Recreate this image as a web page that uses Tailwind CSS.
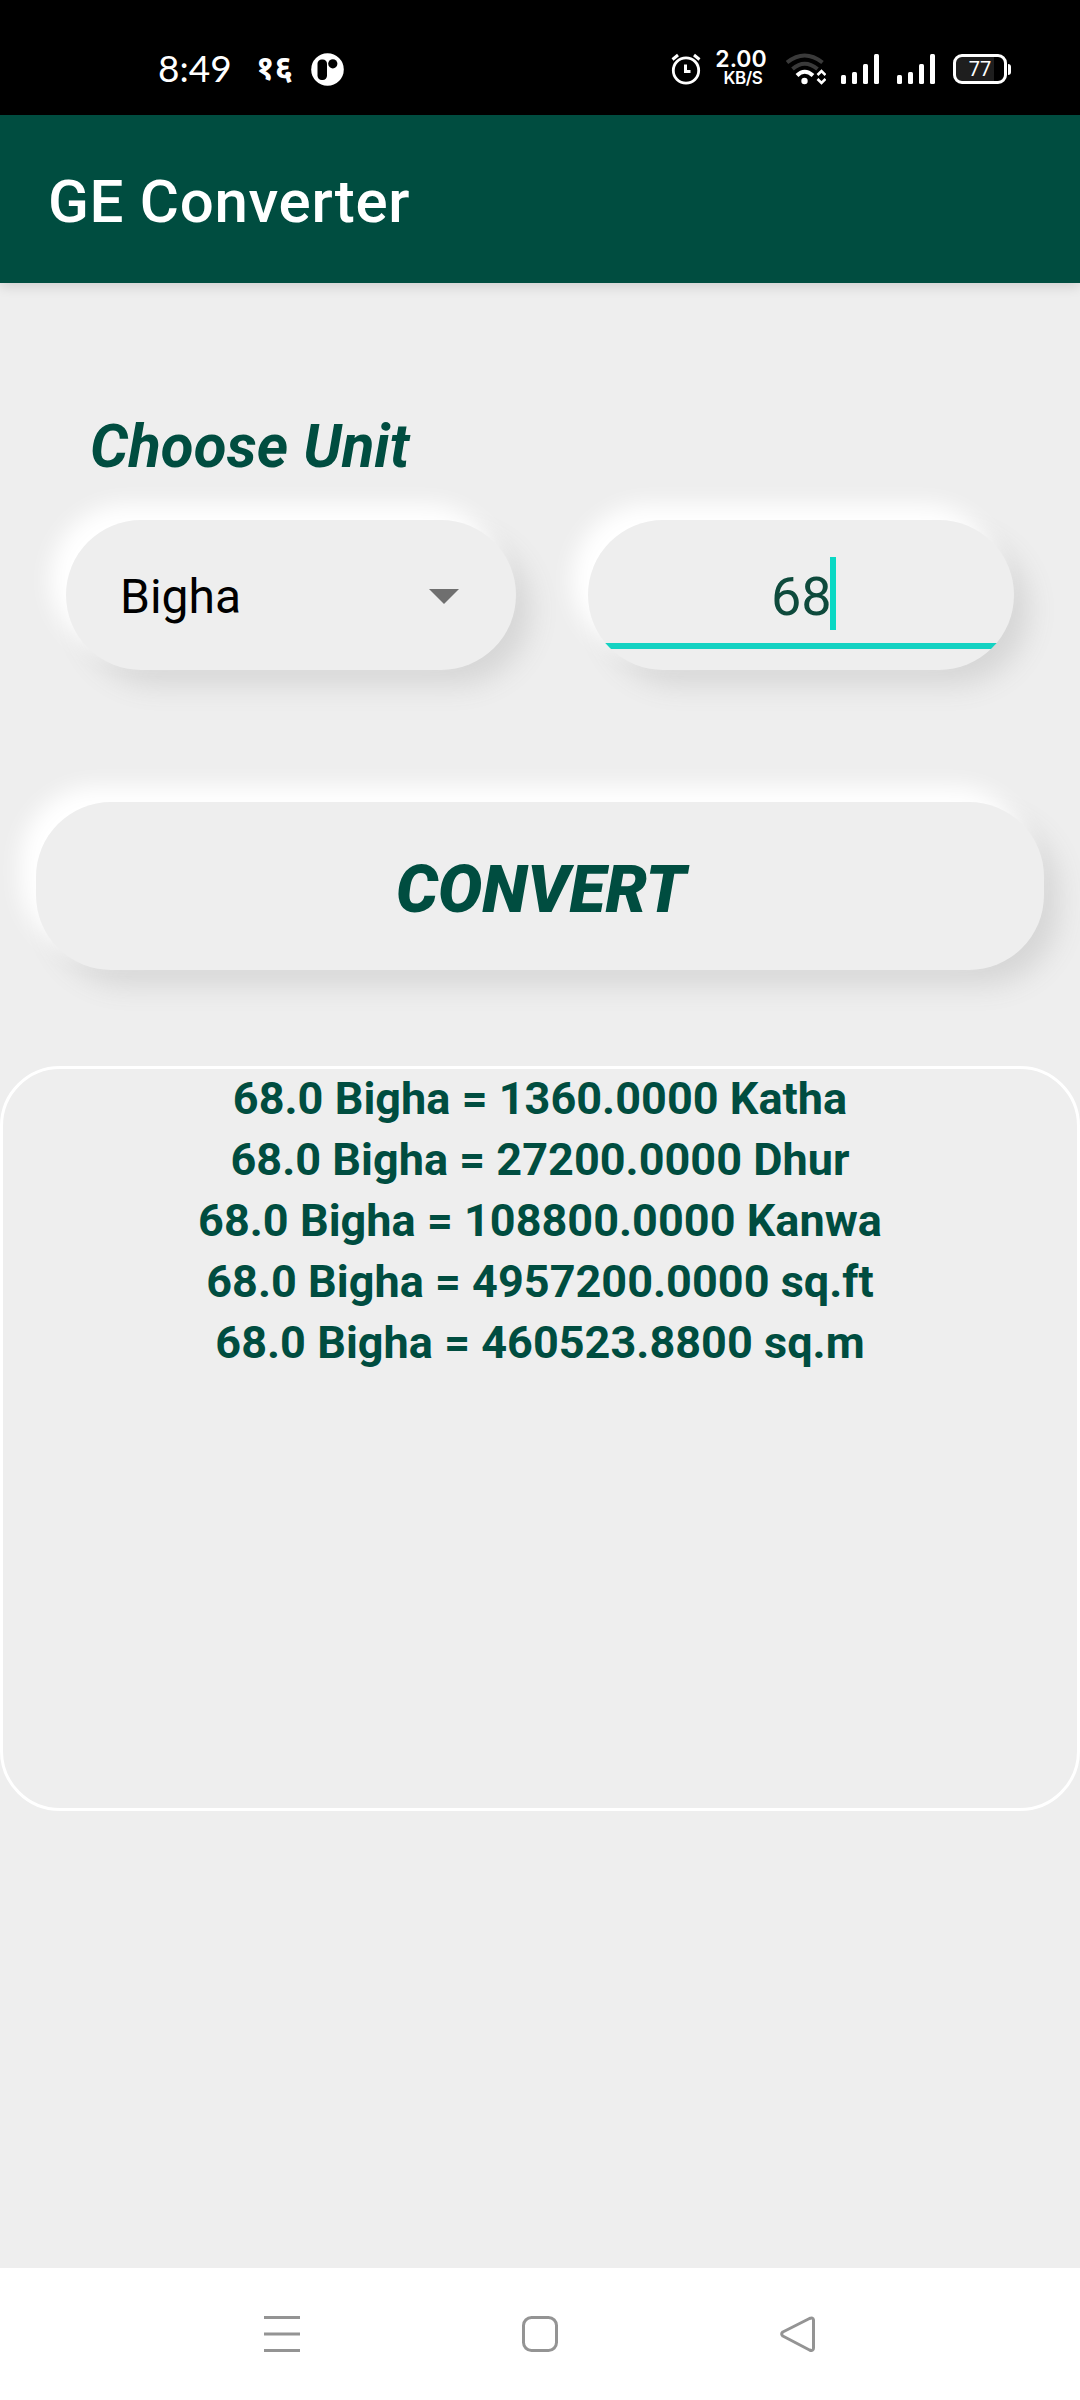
<!DOCTYPE html>
<html lang="en">
<head>
    <meta charset="UTF-8">
    <title>GE Converter</title>
    <script src="https://cdn.jsdelivr.net/npm/@tailwindcss/browser@4"></script>
</head>
<body class="w-[1080px] h-[2400px] flex flex-col bg-[#eeeeee] overflow-hidden font-['Roboto',sans-serif]">
    <!-- Status bar -->
    <div class="h-[115px] shrink-0 bg-black text-white flex items-center pt-[23px] pl-[158px] pr-[69px]">
        <span class="w-[72px] pb-[3px] font-['Lato',sans-serif] text-[37px] leading-none whitespace-nowrap">8:49</span>
        <span class="ml-[26px] w-[35px] pb-[5px] font-['Noto_Sans',sans-serif] font-bold text-[33px] leading-none whitespace-nowrap">१६</span>
        <svg class="ml-[20px]" width="33" height="33" viewBox="0 0 33 33">
            <circle cx="16.5" cy="16.5" r="16.3" fill="#fff"/>
            <rect x="6.5" y="6.5" width="9.5" height="20.5" rx="4.2" fill="#000"/>
            <circle cx="21.8" cy="10.8" r="4.6" fill="#000"/>
        </svg>

        <svg class="ml-auto" width="30" height="32" viewBox="0 0 30 32" fill="none" stroke="#fff">
            <circle cx="15" cy="17.5" r="12.7" stroke-width="2.8"/>
            <path d="M1.5 6.5L7 2M28.500 6.500L23 2" stroke-width="3"/>
            <path d="M14.500 11.500V18.500H19.500" stroke-width="3"/>
        </svg>
        <div class="ml-[14px] w-[54px] flex flex-col items-center font-['Inter',sans-serif] font-semibold">
            <span class="-ml-[2px] text-[23px] leading-[19px]">2.00</span>
            <span class="ml-[2px] text-[17px] leading-[19px] tracking-[-0.4px]">KB/S</span>
        </div>
        <svg class="ml-[17px]" width="40" height="32" viewBox="0 0 40 32" fill="none">
            <path d="M1 9.500Q18.500 -4.500 36.500 9.500" stroke="#3a3a3a" stroke-width="4"/>
            <path d="M6.500 16Q18.500 5.500 31.500 16" stroke="#3a3a3a" stroke-width="4"/>
            <path d="M11 22.500Q18.500 15 27 22.500" stroke="#fff" stroke-width="4"/>
            <circle cx="18.500" cy="28" r="3.200" fill="#fff"/>
            <path d="M31.500 22L35.500 18L39.500 22M31.500 26L35.500 30L39.500 26" stroke="#fff" stroke-width="2.600"/>
        </svg>
        <svg class="ml-[15px]" width="38" height="30" viewBox="0 0 38 30" fill="#fff">
            <rect x="0" y="21" width="5" height="9" rx="1.500"/>
            <rect x="11" y="18" width="5" height="12" rx="1.500"/>
            <rect x="22" y="10" width="5" height="20" rx="1.500"/>
            <rect x="33" y="0" width="5" height="30" rx="1.500"/>
        </svg>
        <svg class="ml-[18px]" width="38" height="30" viewBox="0 0 38 30" fill="#fff">
            <rect x="0" y="21" width="5" height="9" rx="1.500"/>
            <rect x="11" y="18" width="5" height="12" rx="1.500"/>
            <rect x="22" y="10" width="5" height="20" rx="1.500"/>
            <rect x="33" y="0" width="5" height="30" rx="1.500"/>
        </svg>
        <div class="ml-[18px] w-[54px] h-[30px] border-[3px] border-white rounded-[9px] flex items-center justify-center bg-linear-to-r from-[#1e1e1e] from-80% to-black to-80%">
            <span class="text-[20px] leading-none">77</span>
        </div>
        <div class="ml-px w-[3px] h-[11px] bg-white rounded-r-sm"></div>
    </div>

    <!-- App bar -->
    <header class="relative h-[168px] shrink-0 bg-[#004d40] flex items-center px-12 pt-[6px] shadow-[0_3px_12px_rgba(0,0,0,0.14)]">
        <h1 class="text-white font-medium text-[60px] leading-none tracking-[0.7px]">GE Converter</h1>
    </header>

    <main class="flex-1 flex flex-col">
        <h2 class="mt-[129px] ml-[90px] h-[70px] text-[#004d40] font-bold italic text-[60px] leading-[70px] tracking-[0.1px]">Choose Unit</h2>

        <div class="mt-[38px] pl-[66px] pr-[66px] flex justify-between">
            <div class="w-[450px] h-[150px] rounded-[75px] bg-[#eeeeee] flex items-center justify-between pl-[54px] pr-[57px] shadow-[-15px_-15px_22px_1px_#ffffff,15px_15px_28px_#d6d6d6]">
                <span class="pt-1 text-black text-[48px] leading-none">Bigha</span>
                <svg class="mt-[3px]" width="30" height="15" viewBox="0 0 30 15"><path d="M0 0H30L15 15Z" fill="#6f6f6f"/></svg>
            </div>
            <div class="w-[426px] h-[150px] rounded-[75px] bg-[#eeeeee] shadow-[-15px_-15px_22px_1px_#ffffff,15px_15px_28px_#d6d6d6]">
                <div class="h-full rounded-[75px] overflow-hidden flex flex-col">
                    <div class="h-[123px] pt-[37px] pl-[183px] flex">
                        <span class="w-[59px] text-[#0e4a3c] text-[54px] leading-[79px]">68</span>
                        <span class="w-[6px] h-[73px] bg-[#0ad8c4]"></span>
                    </div>
                    <div class="h-[6px] bg-[#14d2c2]"></div>
                </div>
            </div>
        </div>

        <button class="mt-[132px] mx-9 h-[168px] shrink-0 rounded-[75px] bg-[#eeeeee] pt-[7px] pl-[2px] text-[#004d40] font-black italic text-[66px] leading-none shadow-[-15px_-15px_22px_1px_#ffffff,15px_15px_28px_#d6d6d6]">CONVERT</button>

        <!-- Results -->
        <div class="mt-[96px] h-[745px] border-[3px] border-white rounded-[60px] text-center text-[#004d40] font-bold text-[45px] leading-[61px]">
            <div class="-mt-px tracking-[0.03px]">
                <p>68.0 Bigha = 1360.0000 Katha</p>
                <p>68.0 Bigha = 27200.0000 Dhur</p>
                <p>68.0 Bigha = 108800.0000 Kanwa</p>
                <p>68.0 Bigha = 4957200.0000 sq.ft</p>
                <p>68.0 Bigha = 460523.8800 sq.m</p>
            </div>
        </div>
    </main>

    <!-- Navigation bar -->
    <nav class="h-[132px] shrink-0 bg-white flex items-center justify-between pl-[264px] pr-[264px]">
        <svg width="36" height="36" viewBox="0 0 36 36" fill="none" stroke="#949494" stroke-width="3">
            <path d="M0 1.500H36M0 18H36M0 34.500H36"/>
        </svg>
        <svg width="36" height="36" viewBox="0 0 36 36" fill="none" stroke="#949494" stroke-width="3">
            <rect x="1.500" y="1.500" width="33" height="33" rx="8"/>
        </svg>
        <svg width="36" height="36" viewBox="0 0 36 36" fill="none" stroke="#949494" stroke-width="3" stroke-linejoin="round">
            <path d="M29.500 2.500L2.800 16Q0.500 18 2.800 20L29.500 34Q33.500 35.500 33.500 32V4Q33 1 29.500 2.500Z"/>
        </svg>
    </nav>
</body>
</html>
